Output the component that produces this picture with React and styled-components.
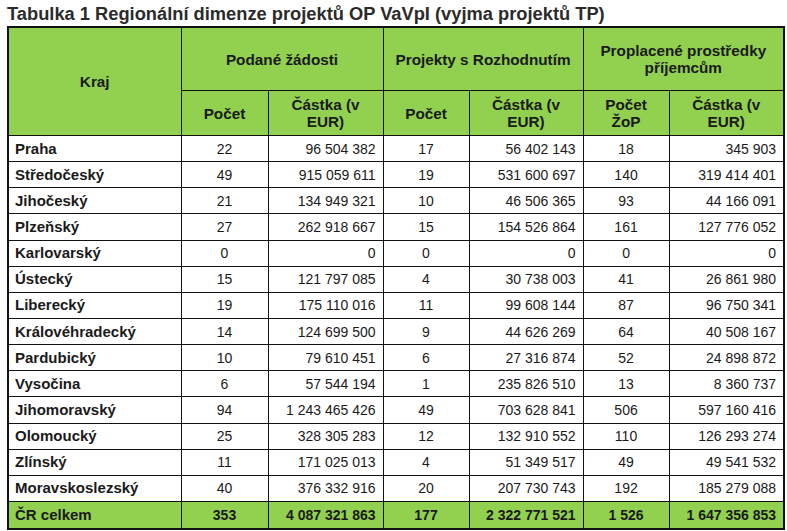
import React from "react";
import styled, { createGlobalStyle } from "styled-components";

const Global = createGlobalStyle`
  html, body { margin: 0; padding: 0; background: #fff; }
  body { font-family: "Liberation Sans", Arial, sans-serif; color: #1a1a1a; }
`;

const Page = styled.div`
  padding: 3px 0 0 7px;
  width: 780px;
`;

const Title = styled.div`
  font-weight: bold;
  font-size: 18.3px;
  line-height: 21px;
  height: 23px;
  color: #2b2b2b;
  white-space: nowrap;
`;

const Table = styled.table`
  border-collapse: collapse;
  table-layout: fixed;
  width: 776px;
  border: 2px solid #111;
  font-size: 14px;
`;

const HeadCell = styled.th`
  background: #92d050;
  border: 1px solid #111;
  font-weight: bold;
  font-size: 15.3px;
  line-height: 17px;
  text-align: center;
  vertical-align: middle;
  padding: 0 2px;
  height: ${(p) => p.$h}px;
  color: #1a1a1a;
`;

const Row = styled.tr`
  height: ${(p) => (p.$total ? 28 : 26.15)}px;
  background: ${(p) => (p.$total ? "#92d050" : "#fff")};
  font-weight: ${(p) => (p.$total ? "bold" : "normal")};
`;

const Cell = styled.td`
  border: 1px solid #111;
  padding: 0;
  padding-left: ${(p) => (p.$align === "left" ? "6px" : "4px")};
  padding-right: ${(p) => (p.$align === "right" ? "7px" : "4px")};
  text-align: ${(p) => p.$align};
  font-weight: ${(p) => (p.$bold ? "bold" : "inherit")};
  font-size: ${(p) => (p.$bold ? "15px" : "14px")};
  white-space: nowrap;
  line-height: 16px;
  color: #1a1a1a;
`;

const rows = [
  ["Praha", "22", "96 504 382", "17", "56 402 143", "18", "345 903"],
  ["Středočeský", "49", "915 059 611", "19", "531 600 697", "140", "319 414 401"],
  ["Jihočeský", "21", "134 949 321", "10", "46 506 365", "93", "44 166 091"],
  ["Plzeňský", "27", "262 918 667", "15", "154 526 864", "161", "127 776 052"],
  ["Karlovarský", "0", "0", "0", "0", "0", "0"],
  ["Ústecký", "15", "121 797 085", "4", "30 738 003", "41", "26 861 980"],
  ["Liberecký", "19", "175 110 016", "11", "99 608 144", "87", "96 750 341"],
  ["Královéhradecký", "14", "124 699 500", "9", "44 626 269", "64", "40 508 167"],
  ["Pardubický", "10", "79 610 451", "6", "27 316 874", "52", "24 898 872"],
  ["Vysočina", "6", "57 544 194", "1", "235 826 510", "13", "8 360 737"],
  ["Jihomoravský", "94", "1 243 465 426", "49", "703 628 841", "506", "597 160 416"],
  ["Olomoucký", "25", "328 305 283", "12", "132 910 552", "110", "126 293 274"],
  ["Zlínský", "11", "171 025 013", "4", "51 349 517", "49", "49 541 532"],
  ["Moravskoslezský", "40", "376 332 916", "20", "207 730 743", "192", "185 279 088"],
];

const total = ["ČR celkem", "353", "4 087 321 863", "177", "2 322 771 521", "1 526", "1 647 356 853"];

const widths = [173, 87, 115, 86, 114, 86, 115];
const aligns = ["left", "center", "right", "center", "right", "center", "right"];

const DataRow = ({ data, isTotal }) => (
  <Row $total={isTotal}>
    {data.map((v, i) => (
      <Cell key={i} $align={aligns[i]} $bold={i === 0}>
        {v}
      </Cell>
    ))}
  </Row>
);

export default function App() {
  return (
    <>
      <Global />
      <Page>
        <Title>Tabulka 1 Regionální dimenze projektů OP VaVpI (vyjma projektů TP)</Title>
        <Table>
          <colgroup>
            {widths.map((w, i) => (
              <col key={i} style={{ width: w }} />
            ))}
          </colgroup>
          <thead>
            <tr>
              <HeadCell rowSpan={2} $h={62}>Kraj</HeadCell>
              <HeadCell colSpan={2} $h={62}>Podané žádosti</HeadCell>
              <HeadCell colSpan={2} $h={62}>Projekty s Rozhodnutím</HeadCell>
              <HeadCell colSpan={2} $h={62}>
                Proplacené prostředky
                <br />
                příjemcům
              </HeadCell>
            </tr>
            <tr>
              <HeadCell $h={44}>Počet</HeadCell>
              <HeadCell $h={44}>
                Částka (v<br />EUR)
              </HeadCell>
              <HeadCell $h={44}>Počet</HeadCell>
              <HeadCell $h={44}>
                Částka (v<br />EUR)
              </HeadCell>
              <HeadCell $h={44}>
                Počet<br />ŽoP
              </HeadCell>
              <HeadCell $h={44}>
                Částka (v<br />EUR)
              </HeadCell>
            </tr>
          </thead>
          <tbody>
            {rows.map((r, i) => (
              <DataRow key={i} data={r} />
            ))}
            <DataRow data={total} isTotal />
          </tbody>
        </Table>
      </Page>
    </>
  );
}
